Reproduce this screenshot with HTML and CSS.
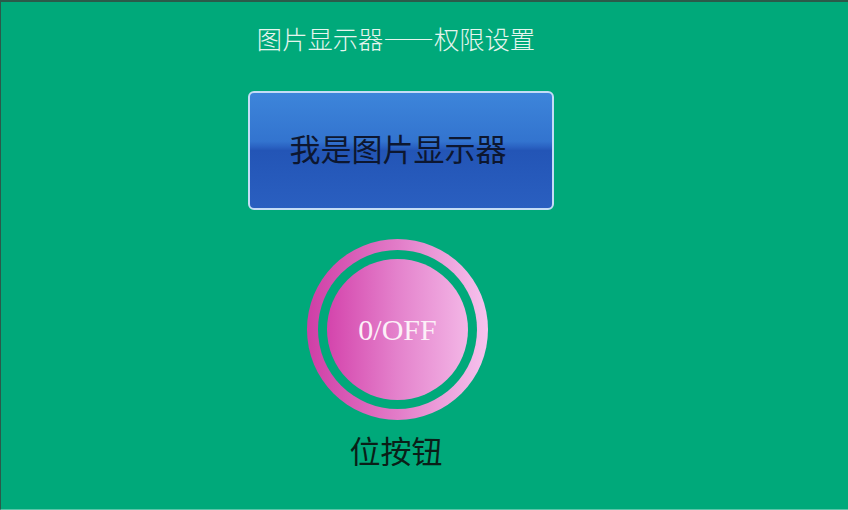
FILE: index.html
```html
<!DOCTYPE html>
<html lang="zh">
<head>
<meta charset="utf-8">
<link rel="stylesheet" href="styles.css">
</head>
<body>
<div class="screen">
  <div class="column">
    <div class="title">图片显示器——权限设置</div>
    <div class="viewer-btn">我是图片显示器</div>
    <div class="ring">
      <div class="knob">0/OFF</div>
    </div>
    <div class="label">位按钮</div>
  </div>
</div>
</body>
</html>
```

FILE: styles.css
```css
html, body {
  margin: 0;
  padding: 0;
}
.screen {
  width: 848px;
  height: 510px;
  box-sizing: border-box;
  background: #00a97a;
  border-top: 2px solid #2b5a4a;
  border-left: 1px solid #2b5a4a;
  border-bottom: 1px solid #5cc4a8;
  overflow: hidden;
}
.column {
  width: 790px;
  display: flex;
  flex-direction: column;
  align-items: center;
}
.title {
  margin-top: 21px;
  font-family: "Noto Sans CJK SC", sans-serif;
  font-weight: 300;
  font-size: 25.3px;
  line-height: 30px;
  color: #e6f5ee;
}
.viewer-btn {
  margin-top: 38px;
  margin-left: 10px;
  width: 306px;
  height: 119px;
  box-sizing: border-box;
  padding: 0 6px 6px 0;
  border: 2px solid #c4dcf6;
  border-radius: 6px;
  background: linear-gradient(180deg, #3d85da 0%, #3374cf 42%, #2a62c2 47%, #2355b6 50%, #2a5fc0 100%);
  display: flex;
  align-items: center;
  justify-content: center;
  font-family: "Noto Sans CJK SC", sans-serif;
  font-weight: 400;
  font-size: 31px;
  color: #0d1730;
}
.ring {
  margin-top: 29px;
  margin-left: 3px;
  width: 181px;
  height: 181px;
  box-sizing: border-box;
  border-radius: 50%;
  background: linear-gradient(90deg, #cf3ea6 0%, #e27cc8 50%, #f6c4ee 100%);
  display: flex;
  align-items: center;
  justify-content: center;
  position: relative;
}
.ring::before {
  content: "";
  position: absolute;
  inset: 11px;
  border-radius: 50%;
  background: #00a97a;
}
.knob {
  position: relative;
  width: 141px;
  height: 141px;
  border-radius: 50%;
  background: linear-gradient(90deg, #d444ac 0%, #e482cc 50%, #f3b6e6 100%);
  display: flex;
  align-items: center;
  justify-content: center;
  font-family: "Liberation Serif", serif;
  font-size: 30px;
  color: #fcf0f8;
}
.label {
  margin-top: 12px;
  font-family: "Noto Sans CJK SC", sans-serif;
  font-weight: 400;
  font-size: 31px;
  line-height: 36px;
  color: #0a1f18;
}
```
